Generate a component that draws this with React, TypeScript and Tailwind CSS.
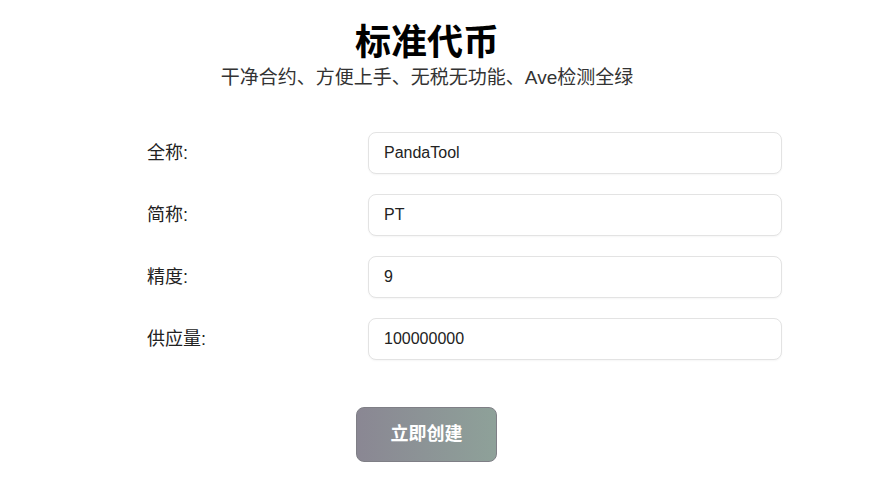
import React from "react";

const fields = [
  { label: "全称:", value: "PandaTool" },
  { label: "简称:", value: "PT" },
  { label: "精度:", value: "9" },
  { label: "供应量:", value: "100000000" },
];

const font = { fontFamily: '"Liberation Sans", Arial, "Noto Sans CJK SC", sans-serif' };

export default function App() {
  return (
    <div className="min-h-[486px] w-[875px] bg-white text-[#222]" style={font}>
      {/* heading */}
      <div className="w-[854px] pt-[20px] text-center">
        <h1 className="text-[36px] font-bold leading-[46px] text-black">标准代币</h1>
        <p className="text-[19px] leading-[24px] text-[#333]">
          干净合约、方便上手、无税无功能、Ave检测全绿
        </p>
      </div>

      {/* form */}
      <div className="mt-[42px] flex flex-col gap-[20px] pl-[147px]">
        {fields.map((f) => (
          <div key={f.label} className="flex items-center">
            <label className="w-[221px] text-[18px] text-[#222]">{f.label}</label>
            <input
              readOnly
              value={f.value}
              className="h-[42px] w-[414px] rounded-lg border border-[#e3e3e3] bg-white px-[15px] text-[16px] text-[#222] shadow-[0_1px_2px_rgba(0,0,0,0.04)] outline-none"
              style={font}
            />
          </div>
        ))}
      </div>

      {/* submit */}
      <div className="mt-[47px] flex w-[853px] justify-center">
        <button className="h-[55px] w-[141px] rounded-lg border border-[#7f7f86] bg-gradient-to-r from-[#8a8793] to-[#8ea199] text-[18px] font-bold text-white">
          立即创建
        </button>
      </div>
    </div>
  );
}
